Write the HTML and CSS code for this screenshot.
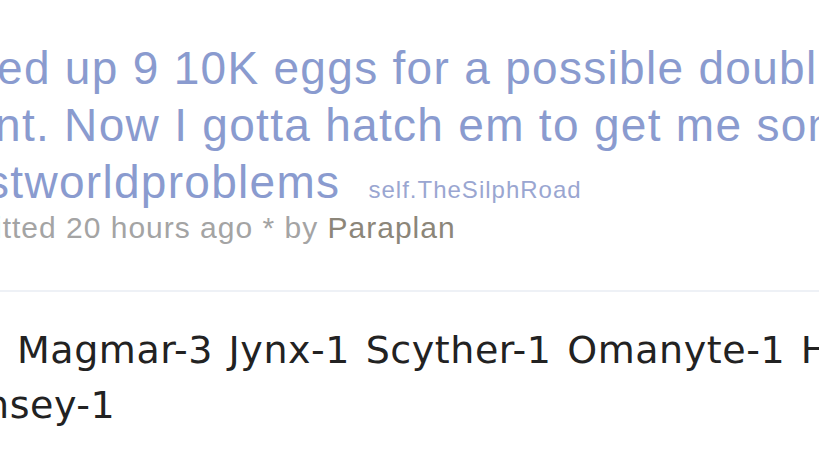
FILE: index.html
```html
<!DOCTYPE html>
<html lang="en">
<head>
  <meta charset="UTF-8">
  <meta name="viewport" content="width=device-width, initial-scale=1.0">
  <title>Saved up 9 10K eggs : TheSilphRoad</title>
  <link rel="stylesheet" href="styles.css">
</head>
<body>
  <div class="post">
    <p class="title">
      <a class="title-line first" href="#">ed up 9 10K eggs for a possible double</a>
      <a class="title-line second" href="#">nt. Now I gotta hatch em to get me some</a>
      <span class="title-line third"><a href="#">stworldproblems</a> <span class="domain">self.TheSilphRoad</span></span>
    </p>
    <p class="tagline">itted 20 hours ago * by <a class="author" href="#">Paraplan</a></p>
  </div>

  <div class="usertext">
    <p class="body-line first">Magmar-3 Jynx-1 Scyther-1 Omanyte-1 Horsea-1</p>
    <p class="body-line second">nsey-1</p>
  </div>
</body>
</html>
```

FILE: styles.css
```css
html, body {
  margin: 0;
  padding: 0;
  overflow: hidden;
  background-color: #fff;
}

body {
  width: 819px;
  height: 452px;
}

a {
  text-decoration: none;
}

.post {
  padding-top: 40px;
  padding-bottom: 45px;
  border-bottom: 2px solid #eef1f6;
}

.title {
  margin: 0;
  font-family: "Liberation Sans", Arial, sans-serif;
  font-size: 46px;
  line-height: 57px;
  letter-spacing: 1.3px;
  white-space: nowrap;
}

.title a {
  color: #8a9bcf;
}

.title-line {
  display: block;
}

.title-line.first {
  margin-left: -3px;
}

.title-line.second {
  margin-left: -5px;
}

.title-line.third {
  margin-left: -14px;
}

.domain {
  margin-left: 14px;
  font-size: 24px;
  line-height: 1;
  letter-spacing: 1px;
  color: #9aa6d1;
}

.tagline {
  margin: 0 0 0 -5px;
  font-family: "Liberation Sans", Arial, sans-serif;
  font-size: 30px;
  line-height: 34px;
  letter-spacing: 1px;
  color: #a4a4a4;
  white-space: nowrap;
}

.author {
  color: #8c8679;
}

.usertext {
  padding-top: 31px;
  font-family: "DejaVu Sans", Verdana, sans-serif;
  font-size: 38px;
  line-height: 55px;
  letter-spacing: 0.55px;
  word-spacing: 3px;
  color: #222;
  white-space: nowrap;
}

.body-line {
  margin: 0;
}

.body-line.first {
  padding-left: 17px;
}

.body-line.second {
  margin-left: -15px;
}
```
